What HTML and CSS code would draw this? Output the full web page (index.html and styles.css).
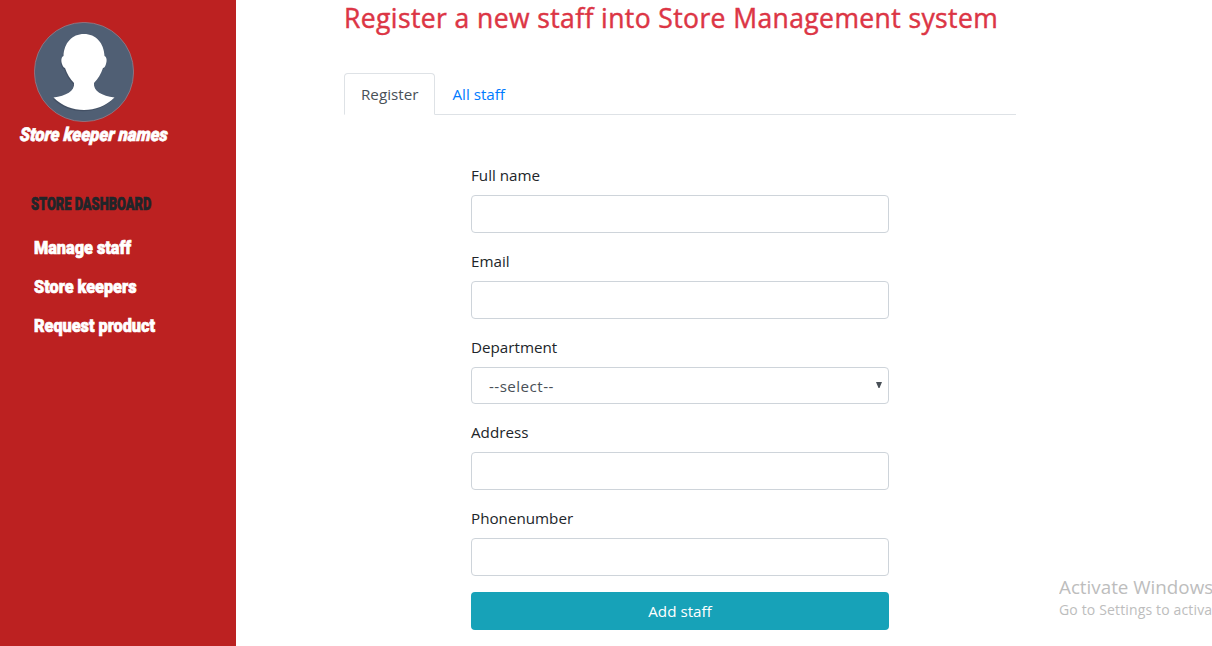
FILE: index.html
```
<!DOCTYPE html>
<html lang="en">
<head>
<meta charset="utf-8">
<title>Store Management system</title>
<link rel="stylesheet" href="styles.css">
</head>
<body>
<div class="layout">
  <aside class="sidebar">
    <svg class="avatar" viewBox="0 0 100 100" aria-hidden="true">
      <circle cx="50" cy="50" r="49.600" fill="#505f74" stroke="#9b8590" stroke-width=".7"/>
      <path transform="translate(-.8 1.3)" fill="#435064" d="M50 12C38 12 30 21 29.500 34C27 35 27 39 28 42C29 45 30.500 46 31 46C33 52 36 57 40 61C41 69 32 74 19.500 75.500C28 84 39 88 50 88C61 88 72 84 80.500 75.500C68 74 59 69 60 61C64 57 67 52 69 46C70 46 71 45 72 42C73 39 73 35 70.500 34C70 21 62 12 50 12Z"/>
      <path fill="#fff" d="M50 12C38 12 30 21 29.500 34C27 35 27 39 28 42C29 45 30.500 46 31 46C33 52 36 57 40 61C41 69 32 74 19.500 75.500C28 84 39 88 50 88C61 88 72 84 80.500 75.500C68 74 59 69 60 61C64 57 67 52 69 46C70 46 71 45 72 42C73 39 73 35 70.500 34C70 21 62 12 50 12Z"/>
    </svg>
    <div class="keeper"><span class="narrow">Store keeper names</span></div>
    <h2 class="side-title"><span class="narrow">STORE DASHBOARD</span></h2>
    <nav class="menu">
      <a class="menu-link"><span class="narrow">Manage staff</span></a>
      <a class="menu-link"><span class="narrow">Store keepers</span></a>
      <a class="menu-link"><span class="narrow">Request product</span></a>
    </nav>
  </aside>
  <main class="content">
    <h1 class="title">Register a new staff into Store Management system</h1>
    <div class="tabs">
      <a class="tab tab-active">Register</a>
      <a class="tab">All staff</a>
    </div>
    <form class="form">
      <label class="label" for="name">Full name</label>
      <input class="control" id="name" type="text">
      <label class="label" for="email">Email</label>
      <input class="control" id="email" type="text">
      <label class="label" for="dept">Department</label>
      <div class="select" id="dept"><span class="select-value">--select--</span><svg class="caret" viewBox="0 0 6 6"><path d="M0 0H6L3.500 6H2.500Z" fill="#495057"/></svg></div>
      <label class="label" for="address">Address</label>
      <input class="control" id="address" type="text">
      <label class="label" for="phone">Phonenumber</label>
      <input class="control" id="phone" type="text">
      <button class="submit" type="button">Add staff</button>
    </form>
  </main>
  <div class="watermark">
    <div class="wm-title">Activate Windows</div>
    <div class="wm-text">Go to Settings to activa</div>
  </div>
</div>
</body>
</html>
```
FILE: styles.css
```
* { box-sizing: border-box; }
body {
  margin: 0;
  height: 646px;
  overflow: hidden;
  background: #fff;
  color: #212529;
  font: 15.2px/24px "Open Sans", "Noto Sans", sans-serif;
}
.layout { position: relative; display: flex; width: 1212px; height: 646px; overflow: hidden; }
.sidebar {
  width: 236px;
  height: 646px;
  padding-top: 22px;
  background: #bc2121;
  font-family: Roboto, sans-serif;
  font-weight: 900;
  color: #fff;
}
.avatar { display: block; width: 100px; height: 100px; margin-left: 34px; }
.narrow { display: inline-block; transform-origin: 0 50%; transform: scaleX(.855); white-space: nowrap; -webkit-text-stroke: .7px currentColor; }
.keeper { height: 26px; padding-left: 20px; font-size: 19px; line-height: 26px; font-style: italic; }
.keeper .narrow { transform: scaleX(.885) skewX(-5deg); }
.side-title { margin: 44px 0 0; padding-left: 31px; font-size: 17.500px; line-height: 24px; font-weight: 900; color: #212529; }
.side-title .narrow { transform: scaleX(.735); }
.menu { display: flex; flex-direction: column; padding: 12px 0 0 34px; }
.menu-link { height: 39px; font-size: 19px; line-height: 39px; }
.content { width: 672px; margin-left: 108px; }
.title {
  margin: 0;
  height: 73px;
  font-size: 26.500px;
  line-height: 37px;
  font-weight: 500;
  letter-spacing: .4px;
  color: #dc3545;
  -webkit-text-stroke: .45px currentColor;
  white-space: nowrap;
}
.tabs { display: flex; height: 42px; border-bottom: 1px solid #dee2e6; }
.tab { height: 42px; padding: 8px 16.500px; color: #007bff; border: 1px solid transparent; }
.tab-active {
  width: 91px;
  padding: 8px 0 0 16px;
  background: #fff;
  color: #495057;
  border-color: #dee2e6 #dee2e6 #fff;
  border-radius: 4px 4px 0 0;
}
.form { display: flex; flex-direction: column; width: 418px; margin: 48px 0 0 127px; }
.label { height: 24px; margin-bottom: 8px; }
.control {
  height: 38px;
  margin: 0 0 16px;
  padding: 6px 12px;
  border: 1px solid #ced4da;
  border-radius: 4px;
  background: #fff;
}
.select {
  display: flex;
  justify-content: space-between;
  height: 37px;
  margin-bottom: 16px;
  padding: 6px 6px 0 17px;
  border: 1px solid #ced4da;
  border-radius: 4px;
  color: #495057;
}
.select-value { letter-spacing: .45px; }
.caret { width: 6px; height: 6px; margin-top: 8px; }
.submit {
  height: 38px;
  padding: 0;
  border: 0;
  border-radius: 4px;
  background: #17a2b8;
  color: #fff;
  font: inherit;
}
.watermark { position: absolute; left: 1059px; top: 574px; width: 153px; overflow: hidden; white-space: nowrap; color: #bdbdbd; }
.wm-title { font-size: 18.800px; line-height: 26px; }
.wm-text { font-size: 14px; line-height: 19px; letter-spacing: .15px; }
```
